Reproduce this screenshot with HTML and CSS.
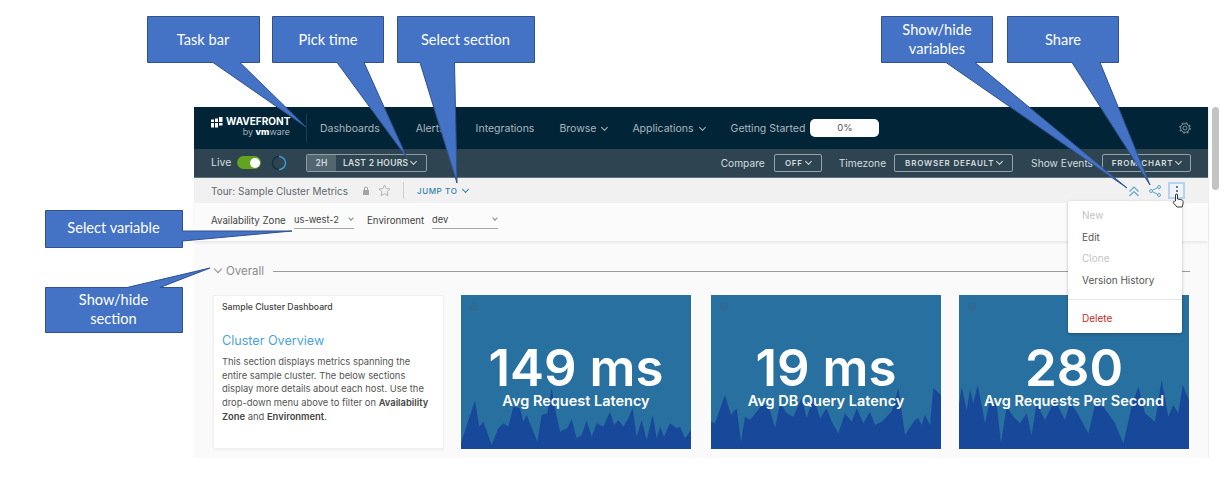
FILE: index.html
```html
<!DOCTYPE HTML>
<html>

<head>
  <meta charset="utf-8">
  <title>Tour: Sample Cluster Metrics</title>
  <link rel="stylesheet" href="styles.css">
</head>

<body>
  <div class="screen">
    <div class="app">

      <!-- top nav -->
      <div class="nav">
        <div class="logo">
          <svg class="logo-mark" viewBox="0 0 12 11" width="12" height="11">
            <path fill="#fff" d="M0 2.500h3v2.500H0zM0 6h3v4.500H0zM4 1.500h3V5H4zM4 6h3v4.500H4zM8 0h3.500v5H8zM8 6h3.500v2.500H8z" />
          </svg>
          <div class="logo-text">
            <div class="logo-name">WAVEFRONT</div>
            <div class="logo-by">by <b>vm</b>ware</div>
          </div>
        </div>
        <a class="nav-link nav-dash">Dashboards</a>
        <a class="nav-link nav-alerts">Alerts</a>
        <a class="nav-link nav-integ">Integrations</a>
        <a class="nav-link nav-browse">Browse <i class="chev"></i></a>
        <a class="nav-link nav-apps">Applications <i class="chev"></i></a>
        <a class="nav-link nav-start">Getting Started</a>
        <div class="progress">0%</div>
        <svg class="gear" viewBox="0 0 12 12" width="12" height="12">
          <circle cx="6" cy="6" r="2" fill="none" stroke="#7d8c95" />
          <circle cx="6" cy="6" r="4.300" fill="none" stroke="#7d8c95" />
          <circle cx="6" cy="6" r="5.200" fill="none" stroke="#7d8c95" stroke-width="1.200" stroke-dasharray="2 2.080" />
        </svg>
      </div>

      <!-- time and compare bar -->
      <div class="subnav">
        <span class="live">Live</span>
        <span class="toggle"><i></i></span>
        <svg class="spinner" viewBox="0 0 16 16" width="16" height="16">
          <circle cx="8" cy="8" r="6.500" fill="none" stroke="#15303f" stroke-width="1.500" />
          <path d="M8 1.500A6.500 6.500 0 0 1 8 14.500" fill="none" stroke="#3f9fd0" stroke-width="1.500" />
        </svg>
        <div class="timepick">
          <span class="time-short">2H</span>
          <span class="time-long">LAST 2 HOURS <i class="chev"></i></span>
        </div>
        <div class="subnav-right">
          <span class="opt-label">Compare</span>
          <span class="opt-btn opt-off">OFF <i class="chev"></i></span>
          <span class="opt-label opt-tz">Timezone</span>
          <span class="opt-btn opt-browser">BROWSER DEFAULT <i class="chev"></i></span>
          <span class="opt-label opt-ev">Show Events</span>
          <span class="opt-btn opt-chart">FROM CHART <i class="chev"></i></span>
        </div>
      </div>

      <!-- dashboard title -->
      <div class="titlebar">
        <span class="dash-name">Tour: Sample Cluster Metrics</span>
        <svg class="lock" viewBox="0 0 8 9" width="8" height="9">
          <path fill="#a5a5a5" d="M1 4h6v5H1zM2 4V2.500a2 2 0 0 1 4 0V4H5V2.500a1 1 0 0 0-2 0V4z" />
        </svg>
        <svg class="star" viewBox="0 0 14 14" width="13" height="13">
          <path fill="none" stroke="#b0b0b0" d="M7 1l1.800 3.900 4.200.5-3.100 2.900.8 4.200L7 10.400l-3.700 2.100.8-4.200L1 5.400l4.200-.5z" />
        </svg>
        <span class="title-sep"></span>
        <span class="jump">JUMP TO <i class="chev"></i></span>
        <div class="title-icons">
          <svg viewBox="0 0 12 12" width="12" height="12">
            <path fill="none" stroke="#5aa5cf" stroke-width="1.100" d="M1.500 6.500L6 2l4.500 4.500M1.500 11L6 6.500l4.500 4.500" />
          </svg>
          <svg class="icon-share" viewBox="0 0 12 12" width="12" height="12">
            <g fill="none" stroke="#5aa5cf">
              <circle cx="2" cy="6" r="1.500" />
              <circle cx="10" cy="2" r="1.500" />
              <circle cx="10" cy="10" r="1.500" />
              <path d="M3.300 5.300l5.400-2.600M3.300 6.700l5.400 2.600" />
            </g>
          </svg>
          <span class="kebab"><i></i><i></i><i></i></span>
        </div>
      </div>

      <!-- variables -->
      <div class="varbar">
        <span class="var-label">Availability Zone</span>
        <span class="var-select var-zone">us-west-2<i class="chev"></i></span>
        <span class="var-label var-env">Environment</span>
        <span class="var-select var-dev">dev<i class="chev"></i></span>
      </div>

      <!-- section -->
      <div class="section">
        <div class="section-head">
          <i class="chev"></i>
          <span class="section-name">Overall</span>
          <span class="section-line"></span>
        </div>
        <div class="cards">
          <div class="card-text">
            <h4>Sample Cluster Dashboard</h4>
            <h2>Cluster Overview</h2>
            <p>This section displays metrics spanning the<br>
              entire sample cluster. The below sections<br>
              display more details about each host. Use the<br>
              drop-down menu above to filter on <b>Availability</b><br>
              <b>Zone</b> and <b>Environment</b>.</p>
          </div>
          <div class="tile">
            <i class="tile-dot"></i>
            <svg class="spark" viewBox="3 0 690 207" preserveAspectRatio="none">
              <path d="M3 207V190L22 130 45 62 58 140 70 125 95 195 115 145 130 130 145 140 160 80 180 85 190 125 200 105 232 185 245 105 262 100 275 25 290 110 300 155 322 145 335 118 350 175 365 165 380 122 395 170 410 130 430 140 450 95 462 135 475 120 490 140 505 115 518 85 530 170 545 120 560 180 578 105 590 175 600 140 612 170 630 130 650 145 660 140 675 175 693 150V207Z" />
            </svg>
            <div class="tile-num">149 ms</div>
            <div class="tile-label">Avg Request Latency</div>
          </div>
          <div class="tile tile-two">
            <i class="tile-dot"></i>
            <svg class="spark" viewBox="18 0 690 207" preserveAspectRatio="none">
              <path d="M18 207V125L30 130 42 95 60 45 78 105 95 85 108 185 120 110 135 120 155 95 175 70 195 90 210 145 225 70 245 100 265 110 290 55 305 115 325 50 345 115 365 85 380 125 400 160 420 100 440 125 455 85 475 130 495 95 510 135 530 125 560 95 580 25 600 165 630 120 640 115 650 135 660 105 675 135 685 25 708 45V207Z" />
            </svg>
            <div class="tile-num">19 ms</div>
            <div class="tile-label">Avg DB Query Latency</div>
          </div>
          <div class="tile tile-three">
            <i class="tile-dot"></i>
            <svg class="spark" viewBox="12 0 690 207" preserveAspectRatio="none">
              <path d="M12 207V75L20 20 35 90 45 30 55 70 68 15 90 130 105 60 125 75 138 190 155 80 175 110 195 130 215 100 230 165 245 70 270 120 300 60 330 120 345 70 365 95 400 160 420 75 445 80 480 130 505 190 530 80 550 20 570 100 600 125 620 0 640 110 655 75 670 100 683 15 702 60V207Z" />
            </svg>
            <div class="tile-num">280</div>
            <div class="tile-label">Avg Requests Per Second</div>
          </div>
        </div>
      </div>
    </div>
    <div class="scroll"><i></i></div>
  </div>

  <!-- open menu over the dashboard -->
  <ul class="menu">
    <li class="off">New</li>
    <li>Edit</li>
    <li class="off">Clone</li>
    <li>Version History</li>
    <li class="menu-del">Delete</li>
  </ul>

  <svg class="hand" viewBox="0 0 12 15" width="12" height="15">
    <path fill="#fff" stroke="#222" stroke-width=".9" d="M3.500 8V2a1 1 0 0 1 2 0v4l4 .8c1 .2 1.500.8 1.500 1.700V11l-1 3H5L1.500 10c-.8-1 .4-2.200 1.200-1.400z" />
  </svg>

  <!-- callouts -->
  <svg class="callouts" viewBox="0 0 1232 489" width="1232" height="489">
    <g fill="#4472c4" stroke="#2f528f">
      <path d="M147.500 16.500H259.500V62.500H240L306 127 213 62.500H147.500Z" />
      <path d="M272.500 16.500H383.500V62.500H364L407 158 337 62.500H272.500Z" />
      <path d="M397.500 16.500H534.500V62.500H454.500L457 183 420 62.500H397.500Z" />
      <path d="M881.500 16.500H992.500V62.500H975L1127 188 946 62.500H881.500Z" />
      <path d="M1007.500 16.500H1118.500V62.500H1100L1150 185 1072 62.500H1007.500Z" />
      <path d="M45.500 210.500H182.500V231L292 231 182.500 241V247.500H45.500Z" />
      <path d="M45.500 287.500H127L210 268 160 287.500H182.500V332.500H45.500Z" />
    </g>
  </svg>
  <div class="note note-task">Task bar</div>
  <div class="note note-time">Pick time</div>
  <div class="note note-section">Select section</div>
  <div class="note note-vars">Show/hide<br>variables</div>
  <div class="note note-share">Share</div>
  <div class="note note-var">Select variable</div>
  <div class="note note-hide">Show/hide<br>section</div>
</body>

</html>
```

FILE: styles.css
```css
* {
  margin: 0;
  padding: 0;
  box-sizing: border-box;
}

html,
body {
  width: 1232px;
  height: 489px;
  overflow: hidden;
  background: #fff;
}

body {
  position: relative;
  font-family: Inter, "Open Sans", sans-serif;
  font-size: 10px;
  color: #565656;
}

i {
  font-style: normal;
}

li {
  list-style: none;
}

.chev {
  display: inline-block;
  width: 5px;
  height: 5px;
  border-right: 1.300px solid currentColor;
  border-bottom: 1.300px solid currentColor;
  transform: translateY(-2px) rotate(45deg);
}

.screen {
  display: flex;
  margin: 107px 0 0 194px;
  height: 351px;
}

.app {
  width: 1015px;
  background: #fafafa;
  border-right: 1px solid #eee;
}

.scroll {
  width: 10px;
  padding-left: 3px;
}

.scroll i {
  display: block;
  width: 7px;
  height: 83px;
  border-radius: 4px;
  background: #c4c4c4;
}

/* top nav */
.nav {
  display: flex;
  align-items: center;
  height: 42px;
  padding-left: 17px;
  background: #012537;
}

.logo {
  display: flex;
  width: 96px;
  height: 30px;
  padding-top: 3px;
  border-right: 1px solid #1b3d4e;
}

.logo-mark {
  margin: 1px 3px 0 0;
}

.logo-text {
  width: 64px;
  color: #fff;
  text-align: right;
}

.logo-name {
  font-size: 10px;
  font-weight: 700;
  line-height: 11px;
}

.logo-by {
  font-size: 9px;
  font-weight: 300;
  line-height: 10px;
  color: #c9d2d7;
}

.logo-by b {
  color: #fff;
  font-weight: 800;
}

.nav-link {
  font-size: 10.500px;
  color: #aab7bf;
  white-space: nowrap;
}

.nav-link .chev {
  margin-left: 3px;
}

.nav-dash {
  margin-left: 13px;
}

.nav-alerts {
  margin-left: 36px;
}

.nav-integ {
  margin-left: 31px;
}

.nav-browse {
  margin-left: 25px;
}

.nav-apps {
  margin-left: 25px;
}

.nav-start {
  margin-left: 26px;
}

.progress {
  width: 69px;
  height: 18px;
  margin-left: 5px;
  border-radius: 5px;
  background: #fff;
  color: #555;
  font-size: 9.500px;
  line-height: 18px;
  text-align: center;
}

.gear {
  margin-left: auto;
  margin-right: 17px;
}

/* time and compare bar */
.subnav {
  display: flex;
  align-items: center;
  height: 29px;
  padding-left: 17px;
  padding-bottom: 1px;
  background: #2e4451;
  border-bottom: 1px solid #5d7380;
  color: #d5dcdf;
}

.live {
  width: 26px;
  font-size: 10.500px;
}

.toggle {
  display: flex;
  justify-content: flex-end;
  align-items: center;
  width: 24px;
  height: 13px;
  padding-right: 1px;
  border-radius: 7px;
  background: #62a420;
}

.toggle i {
  width: 10px;
  height: 10px;
  border-radius: 50%;
  background: #fff;
}

.spinner {
  margin-left: 10px;
}

.timepick {
  display: flex;
  align-items: center;
  width: 121px;
  height: 18px;
  margin-left: 19px;
  border: 1px solid #8d9ca5;
  border-radius: 2px;
  font-size: 8.500px;
  font-weight: 600;
  letter-spacing: .3px;
  white-space: nowrap;
}

.time-short {
  width: 29px;
  height: 100%;
  background: #51666f;
  line-height: 16px;
  text-align: center;
}

.time-long {
  padding-left: 7px;
}

.subnav-right {
  display: flex;
  align-items: center;
  margin-left: auto;
  padding-right: 17px;
}

.opt-label {
  font-size: 10.200px;
  white-space: nowrap;
}

.opt-tz {
  margin-left: 17px;
}

.opt-ev {
  margin-left: 18px;
}

.opt-btn {
  height: 18px;
  margin-left: 9px;
  border: 1px solid #93a3ac;
  border-radius: 2px;
  font-size: 8px;
  font-weight: 600;
  letter-spacing: .8px;
  line-height: 16px;
  text-align: center;
  white-space: nowrap;
}

.opt-off {
  width: 48px;
}

.opt-browser {
  width: 119px;
  margin-left: 8px;
}

.opt-chart {
  width: 89px;
}

/* dashboard title */
.titlebar {
  display: flex;
  align-items: center;
  height: 25px;
  padding-left: 17px;
  background: #f1f1f1;
}

.dash-name {
  width: 138px;
  font-size: 10px;
  color: #5f686d;
  white-space: nowrap;
}

.lock {
  margin-left: 13px;
}

.star {
  margin-left: 8px;
}

.title-sep {
  width: 1px;
  height: 17px;
  margin-left: 12px;
  background: #d0d0d0;
}

.jump {
  margin-left: 13px;
  color: #2f80ab;
  font-size: 8px;
  font-weight: 500;
  letter-spacing: .6px;
  white-space: nowrap;
}

.jump .chev {
  margin-left: 3px;
}

.title-icons {
  display: flex;
  align-items: center;
  margin-left: auto;
  padding-right: 23px;
}

.icon-share {
  margin-left: 9px;
}

.kebab {
  display: flex;
  flex-direction: column;
  justify-content: center;
  align-items: center;
  gap: 2px;
  width: 17px;
  height: 17px;
  margin-left: 7px;
  border: 2px solid #b5d3ef;
  background: #eef3f8;
}

.kebab i {
  width: 2px;
  height: 2px;
  border-radius: 50%;
  background: #2f4f66;
}

/* variables */
.varbar {
  display: flex;
  align-items: center;
  height: 38px;
  padding-left: 17px;
  padding-bottom: 4px;
  background: #fbfbfb;
  box-shadow: 0 2px 3px rgba(0, 0, 0, .07);
  font-size: 9.700px;
  color: #444;
}

.var-label {
  width: 83px;
  white-space: nowrap;
}

.var-env {
  width: 65px;
  margin-left: 13px;
}

.var-select {
  display: flex;
  justify-content: space-between;
  align-items: center;
  height: 18px;
  padding-right: 1px;
  border-bottom: 1px solid #a9a9a9;
  font-size: 9.300px;
}

.var-select .chev {
  color: #888;
  width: 4px;
  height: 4px;
  border-width: 1px;
}

.var-zone {
  width: 60px;
}

.var-dev {
  width: 66px;
}

/* section */
.section {
  padding: 22px 18px 0 19px;
}

.section-head {
  display: flex;
  align-items: center;
  height: 16px;
  color: #8c8c8c;
}

.section-head .chev {
  width: 6px;
  height: 6px;
  border-width: 1px;
  margin-left: 2px;
}

.section-name {
  margin-left: 5px;
  font-size: 11.500px;
}

.section-line {
  flex: 1;
  height: 1px;
  margin-left: 9px;
  background: #9a9a9a;
}

.cards {
  display: flex;
  margin-top: 16px;
}

.card-text {
  width: 231px;
  height: 154px;
  padding: 6px 8px;
  background: #fff;
  border: 1px solid #f0f0f0;
  box-shadow: 0 1px 2px rgba(0, 0, 0, .05);
}

.card-text h4 {
  font-size: 8.700px;
  font-weight: 500;
  line-height: 11px;
  color: #444;
}

.card-text h2 {
  margin-top: 19px;
  font-size: 12.600px;
  font-weight: 400;
  line-height: 18px;
  color: #49a3dc;
}

.card-text p {
  margin-top: 5px;
  font-size: 9.400px;
  line-height: 13.700px;
  color: #555;
  white-space: nowrap;
}

.card-text b {
  font-weight: 600;
  color: #444;
}

.tile {
  position: relative;
  width: 230px;
  height: 154px;
  margin-left: 17px;
  padding-top: 46px;
  overflow: hidden;
  background: #28709f;
  color: #fff;
  text-align: center;
}

.tile-two {
  margin-left: 20px;
}

.tile-three {
  margin-left: 18px;
}

.tile-dot {
  position: absolute;
  left: 9px;
  top: 8px;
  width: 8px;
  height: 8px;
  border-radius: 50%;
  background: #316a95;
}

.spark {
  position: absolute;
  left: 0;
  bottom: 0;
  width: 230px;
  height: 69px;
}

.spark path {
  fill: #17489a;
}

.tile-num {
  position: relative;
  height: 53px;
  font-size: 51px;
  font-weight: 600;
  line-height: 53px;
}

.tile-label {
  position: relative;
  font-size: 14.500px;
  font-weight: 600;
  line-height: 14px;
}

/* open menu */
.menu {
  position: absolute;
  left: 1068px;
  top: 201px;
  width: 114px;
  height: 132px;
  padding-top: 4px;
  border-radius: 2px;
  background: #fff;
  box-shadow: 0 1px 3px rgba(0, 0, 0, .3);
  font-size: 10px;
  color: #555;
}

.menu li {
  height: 21.600px;
  padding-left: 14px;
  line-height: 21.600px;
}

.menu .off {
  color: #c4c4c4;
}

.menu .menu-del {
  height: 38px;
  margin-top: 8px;
  padding-top: 8px;
  border-top: 1px solid #e6e6e6;
  color: #c92a26;
}

.hand {
  position: absolute;
  left: 1172px;
  top: 193px;
}

/* callouts */
.callouts {
  position: absolute;
  left: 0;
  top: 0;
}

.note {
  position: absolute;
  display: flex;
  align-items: center;
  justify-content: center;
  top: 16px;
  width: 112px;
  height: 47px;
  padding-bottom: 1px;
  color: #fff;
  font-family: Lato, sans-serif;
  font-size: 14.600px;
  line-height: 19px;
  text-align: center;
}

.note-task {
  left: 147px;
}

.note-time {
  left: 272px;
}

.note-section {
  left: 397px;
  width: 137px;
}

.note-vars {
  left: 881px;
  padding-bottom: 2px;
}

.note-share {
  left: 1007px;
}

.note-var {
  left: 45px;
  top: 210px;
  width: 137px;
  height: 37px;
  padding-bottom: 2px;
}

.note-hide {
  left: 45px;
  top: 287px;
  width: 137px;
  height: 45px;
  padding-bottom: 2px;
}
```
